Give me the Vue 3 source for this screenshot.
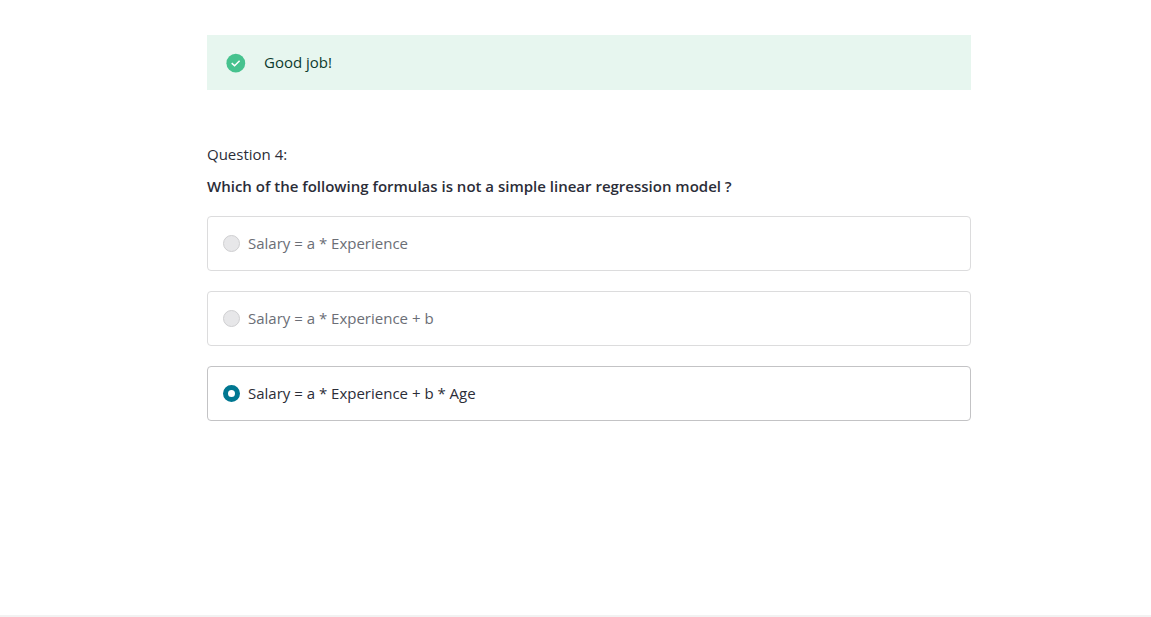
<script setup>
import { ref } from 'vue'

const options = [
  'Salary = a * Experience',
  'Salary = a * Experience + b',
  'Salary = a * Experience + b * Age',
]
const selected = ref(2)
</script>

<template>
  <div class="page">
    <main class="quiz">
      <div class="alert" role="status">
        <svg class="check" viewBox="0 0 20 20" aria-hidden="true">
          <circle cx="9.8" cy="10.2" r="9.4" fill="#46c28e" />
          <path d="M5.7 10.1l2.9 2.6 5-5" fill="none" stroke="#fff" stroke-width="1.5" />
        </svg>
        <span>Good job!</span>
      </div>
      <p class="number">Question 4:</p>
      <form class="question">
        <h1 id="prompt" class="prompt">Which of the following formulas is not a simple linear regression model ?</h1>
        <div class="options" role="radiogroup" aria-labelledby="prompt">
          <label
            v-for="(text, i) in options"
            :key="text"
            class="option"
            :class="{ chosen: selected === i }"
          >
            <input v-model="selected" type="radio" name="answer" :value="i" :disabled="selected !== i" />
            <span>{{ text }}</span>
          </label>
        </div>
      </form>
    </main>
    <footer class="footer"></footer>
  </div>
</template>

<style>
body {
  margin: 0;
  background: #fff;
}
</style>

<style scoped>
.page {
  min-height: 100vh;
  box-sizing: border-box;
  display: flex;
  flex-direction: column;
  font-family: "Open Sans", "Noto Sans", sans-serif;
  font-size: 15px;
  line-height: 21px;
  color: #2b2d38;
}
.quiz {
  flex: 1;
  box-sizing: border-box;
  width: 100%;
  padding: 35px 180px 0 207px;
}
.alert {
  display: flex;
  align-items: center;
  gap: 18px;
  padding: 17px 19px;
  background: #e7f6ef;
  color: #0c3b2e;
}
.check {
  width: 20px;
  height: 20px;
}
.number {
  margin: 54px 0 11px;
}
.prompt {
  margin: 0 0 19px;
  font-size: 15px;
  line-height: 21px;
  font-weight: 600;
}
.options {
  display: grid;
  gap: 20px;
}
.option {
  display: flex;
  align-items: center;
  gap: 8px;
  padding: 16px 15px;
  border: 1px solid #dcdcdd;
  border-radius: 4px;
  color: #6b6e76;
}
.option.chosen {
  border-color: #c3c3c5;
  color: #2b2d38;
}
.option input {
  appearance: none;
  box-sizing: border-box;
  width: 17px;
  height: 17px;
  margin: 0;
  border: 1px solid #cfcfd1;
  border-radius: 50%;
  background: #e7e7e9;
}
.option input:checked {
  border: 5px solid #007791;
  background: #fff;
}
.footer {
  border-top: 2px solid #f2f2f2;
}
</style>
